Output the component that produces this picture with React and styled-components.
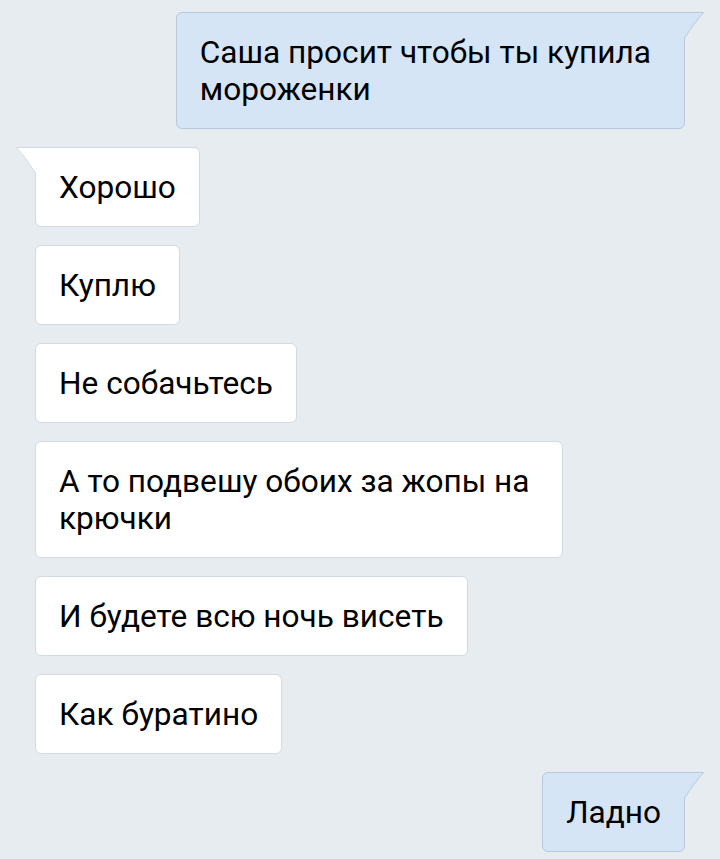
import React from "react";
import styled, { createGlobalStyle } from "styled-components";

const GlobalStyle = createGlobalStyle`
  html, body {
    margin: 0;
    padding: 0;
    background: #e7ecf1;
  }
  body {
    font-family: Roboto, "Liberation Sans", sans-serif;
  }
`;

// line breaks kept as in the screenshot; wrapped bubbles keep some slack on the right
const messages = [
  { out: true, tail: true, wrapped: true, text: "Саша просит чтобы ты купила\nмороженки" },
  { out: false, tail: true, text: "Хорошо" },
  { out: false, text: "Куплю" },
  { out: false, text: "Не собачьтесь" },
  { out: false, wrapped: true, text: "А то подвешу обоих за жопы на\nкрючки" },
  { out: false, text: "И будете всю ночь висеть" },
  { out: false, text: "Как буратино" },
  { out: true, tail: true, text: "Ладно" },
];

const colors = {
  out: { bg: "#d6e5f6", border: "#b5c9df" },
  in: { bg: "#ffffff", border: "#d2d9e1" },
};

export default function App() {
  return (
    <>
      <GlobalStyle />
      <Feed>
        {messages.map((m, i) => (
          <Bubble key={i} $out={m.out} $tail={m.tail} $wrapped={m.wrapped}>
            {m.text}
            {m.tail && <Tail out={m.out} />}
          </Bubble>
        ))}
      </Feed>
    </>
  );
}

function Tail({ out }) {
  const c = out ? colors.out : colors.in;
  return (
    <TailSvg $out={out} width="22" height="27" viewBox="0 0 22 27">
      <g transform={out ? undefined : "translate(22 0) scale(-1 1)"}>
        <path d="M0 0 H21 Q12 10 1.5 26 H0 Z" fill={c.bg} />
        <path d="M0 0.5 H20.5 Q12 10 1.5 26" fill="none" stroke={c.border} strokeWidth="1" />
      </g>
    </TailSvg>
  );
}

const Feed = styled.div`
  display: flex;
  flex-direction: column;
  gap: 18px;
  padding: 12px 35px 6px;
`;

const Bubble = styled.div`
  position: relative;
  align-self: ${(p) => (p.$out ? "flex-end" : "flex-start")};
  max-width: 560px;
  box-sizing: border-box;
  padding: 21px ${(p) => (p.$wrapped ? "33px" : "23px")} 20px 23px;
  background: ${(p) => (p.$out ? colors.out.bg : colors.in.bg)};
  border: 1px solid ${(p) => (p.$out ? colors.out.border : colors.in.border)};
  border-radius: 6px;
  ${(p) =>
    p.$tail &&
    (p.$out ? "border-top-right-radius: 0;" : "border-top-left-radius: 0;")}
  color: #000;
  font-size: 31.6px;
  line-height: 37px;
  white-space: pre-line;
`;

const TailSvg = styled.svg`
  position: absolute;
  top: -1px;
  ${(p) => (p.$out ? "right: -21px;" : "left: -21px;")}
  display: block;
`;
